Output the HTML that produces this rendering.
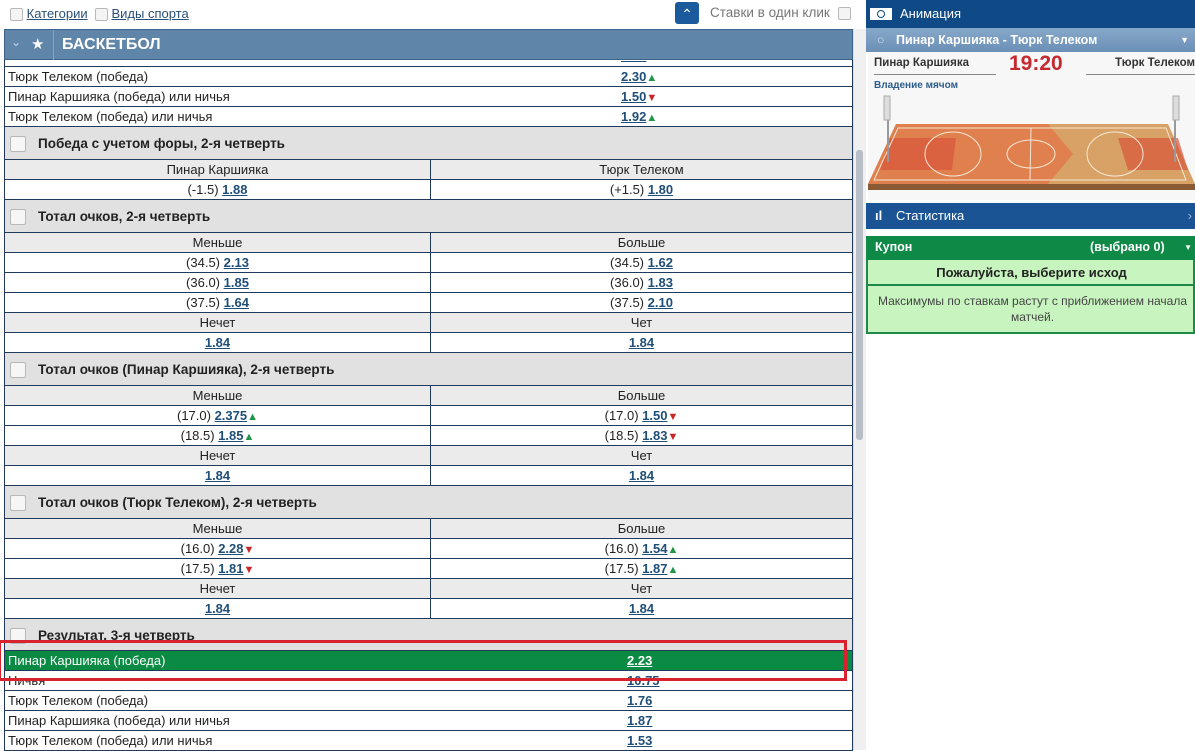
<!DOCTYPE html>
<html><head><meta charset="utf-8"><style>
*{box-sizing:border-box;margin:0;padding:0}
body{width:1195px;height:750px;overflow:hidden;background:#fff;font-family:"Liberation Sans",sans-serif;font-size:13px;color:#222;position:relative}
.abs{position:absolute}
.cb{display:inline-block;width:13px;height:13px;border:1px solid #b8b8b8;border-radius:2px;background:#f4f4f4;vertical-align:middle}
#tbl{position:absolute;left:4px;top:60px;width:849px;border-left:1px solid #1f3a5c;border-right:1px solid #1f3a5c}
.r{height:20px;border-bottom:1px solid #1f3a5c;line-height:19px;display:flex;background:#fff}
.r .n{flex:1;padding-left:3px;white-space:nowrap}
.r .o{position:absolute;left:616px}
.r.one{position:relative}
.c{width:426px;text-align:center;border-right:1px solid #1f3a5c}
.c+.c{border-right:none;flex:1}
.sub{background:#ebebeb}
.sec{height:33px;background:#e1e1e1;border-bottom:1px solid #1f3a5c;font-weight:bold;font-size:13.5px;line-height:33px;padding-left:5px}
.sec .cb{width:16px;height:16px;margin-right:12px;background:#f6f6f6}
a{color:#1f4e79;text-decoration:underline;font-weight:600}
.up{color:#1d9648;font-size:11px}
.dn{color:#c8262b;font-size:11px}
</style></head><body>
<div class="abs" style="left:10px;top:6px;font-size:13px"><span class="cb"></span> <a style="font-weight:normal;color:#2a4f78">Категории</a> &nbsp;<span class="cb"></span> <a style="font-weight:normal;color:#2a4f78">Виды спорта</a></div>
<div class="abs" style="left:675px;top:2px;width:24px;height:22px;background:#1b5a9c;border-radius:3px;color:#fff;text-align:center;line-height:24px;font-size:14px">&#8963;</div>
<div class="abs" style="left:710px;top:5px;color:#777;font-size:13.5px">Ставки в один клик <span class="cb" style="margin-left:4px"></span></div>
<div class="abs" style="left:4px;top:29px;width:849px;height:31px;background:#5f85a9;border:1px solid #3e6388;color:#fff">
<span class="abs" style="left:6px;top:5px;color:#c8d6e4;font-size:12px">&#8964;</span>
<span class="abs" style="left:26px;top:5px;font-size:15px">&#9733;</span>
<span class="abs" style="left:48px;top:0;width:1px;height:30px;background:#86a3bf"></span>
<span class="abs" style="left:57px;top:6px;font-weight:bold;font-size:16px">БАСКЕТБОЛ</span></div>
<div id="tbl">
<div class="r one" style="height:7px"><a class="o" style="top:-14px">&nbsp;&nbsp;&nbsp;&nbsp;&nbsp;&nbsp;&nbsp;</a></div>
<div class="r one"><span class="n">Тюрк Телеком (победа)</span><span class="o"><a>2.30</a><span class="up">▲</span></span></div>
<div class="r one"><span class="n">Пинар Каршияка (победа) или ничья</span><span class="o"><a>1.50</a><span class="dn">▼</span></span></div>
<div class="r one"><span class="n">Тюрк Телеком (победа) или ничья</span><span class="o"><a>1.92</a><span class="up">▲</span></span></div>
<div class="sec"><span class="cb"></span>Победа с учетом форы, 2-я четверть</div>
<div class="r sub"><div class="c">Пинар Каршияка</div><div class="c">Тюрк Телеком</div></div>
<div class="r"><div class="c">(-1.5) <a>1.88</a></div><div class="c">(+1.5) <a>1.80</a></div></div>
<div class="sec"><span class="cb"></span>Тотал очков, 2-я четверть</div>
<div class="r sub"><div class="c">Меньше</div><div class="c">Больше</div></div>
<div class="r"><div class="c">(34.5) <a>2.13</a></div><div class="c">(34.5) <a>1.62</a></div></div>
<div class="r"><div class="c">(36.0) <a>1.85</a></div><div class="c">(36.0) <a>1.83</a></div></div>
<div class="r"><div class="c">(37.5) <a>1.64</a></div><div class="c">(37.5) <a>2.10</a></div></div>
<div class="r sub"><div class="c">Нечет</div><div class="c">Чет</div></div>
<div class="r"><div class="c"><a>1.84</a></div><div class="c"><a>1.84</a></div></div>
<div class="sec"><span class="cb"></span>Тотал очков (Пинар Каршияка), 2-я четверть</div>
<div class="r sub"><div class="c">Меньше</div><div class="c">Больше</div></div>
<div class="r"><div class="c">(17.0) <a>2.375</a><span class="up">▲</span></div><div class="c">(17.0) <a>1.50</a><span class="dn">▼</span></div></div>
<div class="r"><div class="c">(18.5) <a>1.85</a><span class="up">▲</span></div><div class="c">(18.5) <a>1.83</a><span class="dn">▼</span></div></div>
<div class="r sub"><div class="c">Нечет</div><div class="c">Чет</div></div>
<div class="r"><div class="c"><a>1.84</a></div><div class="c"><a>1.84</a></div></div>
<div class="sec"><span class="cb"></span>Тотал очков (Тюрк Телеком), 2-я четверть</div>
<div class="r sub"><div class="c">Меньше</div><div class="c">Больше</div></div>
<div class="r"><div class="c">(16.0) <a>2.28</a><span class="dn">▼</span></div><div class="c">(16.0) <a>1.54</a><span class="up">▲</span></div></div>
<div class="r"><div class="c">(17.5) <a>1.81</a><span class="dn">▼</span></div><div class="c">(17.5) <a>1.87</a><span class="up">▲</span></div></div>
<div class="r sub"><div class="c">Нечет</div><div class="c">Чет</div></div>
<div class="r"><div class="c"><a>1.84</a></div><div class="c"><a>1.84</a></div></div>
<div class="sec" style="height:32px;line-height:34px"><span class="cb"></span>Результат, 3-я четверть</div>
<div class="r one" style="background:#0b8a44;color:#fff"><span class="n">Пинар Каршияка (победа)</span><span class="o" style="left:622px"><a style="color:#fff">2.23</a></span></div>
<div class="r one"><span class="n">Ничья</span><span class="o" style="left:622px"><a>10.75</a></span></div>
<div class="r one"><span class="n">Тюрк Телеком (победа)</span><span class="o" style="left:622px"><a>1.76</a></span></div>
<div class="r one"><span class="n">Пинар Каршияка (победа) или ничья</span><span class="o" style="left:622px"><a>1.87</a></span></div>
<div class="r one"><span class="n">Тюрк Телеком (победа) или ничья</span><span class="o" style="left:622px"><a>1.53</a></span></div>
</div>
<div class="abs" style="left:-2px;top:640px;width:849px;height:41px;border:3px solid #d8232e"></div>
<div class="abs" style="left:853px;top:29px;width:13px;height:721px;background:#f0f0f0;border-left:1px solid #ddd"></div>
<div class="abs" style="left:856px;top:150px;width:7px;height:290px;background:#b8bec6;border-radius:3px"></div>
<!-- right panel -->
<div class="abs" style="left:866px;top:0;width:329px;height:28px;background:#0f4a86;color:#fff;font-size:13px;line-height:27px;padding-left:34px">Анимация
<span class="abs" style="left:4px;top:8px;width:22px;height:12px;background:#fff"></span><span class="abs" style="left:11px;top:10px;width:8px;height:8px;border:1px solid #0f4a86;border-radius:50%"></span></div>
<div class="abs" style="left:866px;top:28px;width:329px;height:24px;background:linear-gradient(#86a8c9,#6b90b6);color:#fff;font-weight:bold;font-size:12.5px;line-height:24px;padding-left:30px">Пинар Каршияка - Тюрк Телеком<span class="abs" style="left:11px;top:0;color:#d9e4ef">&#9675;</span><span class="abs" style="right:6px;top:0;font-size:9px">▼</span></div>
<div class="abs" style="left:868px;top:52px;width:327px;height:148px;background:#f7f7f7">
<span class="abs" style="left:6px;top:5px;font-weight:bold;font-size:11.5px;color:#333;white-space:nowrap">Пинар Каршияка</span>
<span class="abs" style="left:6px;top:22px;width:122px;height:1px;background:#888"></span>
<span class="abs" style="left:141px;top:0;font-weight:bold;font-size:21px;color:#c5282f">19:20</span>
<span class="abs" style="left:218px;top:22px;width:110px;height:1px;background:#888"></span>
<span class="abs" style="right:0;top:5px;font-weight:bold;font-size:11.5px;color:#333;white-space:nowrap">Тюрк Телеком</span>
<span class="abs" style="left:6px;top:28px;font-weight:bold;font-size:10px;color:#2a5c8c">Владение мячом</span>
<svg class="abs" style="left:0;top:40px" width="327" height="108" viewBox="0 0 327 108">
<polygon points="28,32 300,32 327,92 0,92" fill="#d8a266"/>
<polygon points="28,32 180,32 205,62 180,92 0,92" fill="#e07a4a" opacity=".85"/>
<rect x="0" y="92" width="327" height="6" fill="#8a5a35"/>
<polygon points="22,46 88,46 84,78 12,78" fill="#d9553a" opacity=".7"/>
<polygon points="250,46 310,46 320,78 260,78" fill="#d9553a" opacity=".7"/>
<g fill="none" stroke="#f6e7d5" stroke-width="1"><polygon points="30,36 298,36 318,88 6,88"/><line x1="163" y1="36" x2="162" y2="88"/><ellipse cx="163" cy="62" rx="24" ry="14"/><ellipse cx="85" cy="62" rx="28" ry="22"/><ellipse cx="247" cy="62" rx="28" ry="22"/></g>
<line x1="20" y1="10" x2="20" y2="70" stroke="#999" stroke-width="2"/><rect x="16" y="4" width="6" height="24" fill="#ddd" stroke="#aaa"/>
<line x1="307" y1="10" x2="307" y2="70" stroke="#999" stroke-width="2"/><rect x="305" y="4" width="6" height="24" fill="#ddd" stroke="#aaa"/>
</svg></div>
<div class="abs" style="left:866px;top:203px;width:329px;height:26px;background:#1a5494;color:#fff;font-size:13px;line-height:25px;padding-left:30px">Статистика<span class="abs" style="left:9px;top:0;font-weight:bold">ıl</span><span class="abs" style="right:3px;top:0;color:#9bb4d0">›</span></div>
<div class="abs" style="left:866px;top:236px;width:329px;height:24px;background:#0e8a46;color:#fff;font-weight:bold;font-size:12.5px;line-height:23px;padding-left:9px">Купон<span class="abs" style="left:224px">(выбрано 0)</span><span class="abs" style="right:3px;font-size:8px">▼</span></div>
<div class="abs" style="left:866px;top:260px;width:329px;height:74px;background:#c8f5bf;border:2px solid #1f8a48;border-top:none"></div>
<div class="abs" style="left:868px;top:260px;width:327px;height:26px;border-bottom:2px solid #1f8a48;text-align:center;font-weight:bold;font-size:13px;line-height:25px;color:#222">Пожалуйста, выберите исход</div>
<div class="abs" style="left:870px;top:293px;width:325px;text-align:center;font-size:12px;line-height:16px;color:#444">Максимумы по ставкам растут с приближением начала матчей.</div>
</body></html>
